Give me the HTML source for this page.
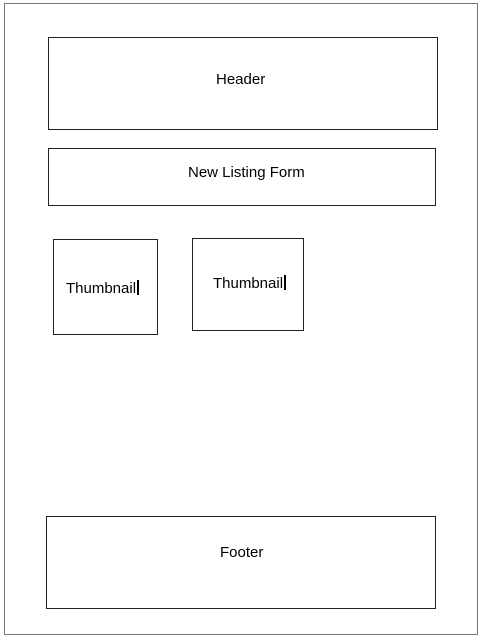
<!DOCTYPE html>
<html><head><style>
body{margin:0;width:482px;height:640px;background:#fff;position:relative;font-family:"Liberation Sans",Arial,sans-serif;font-size:15px;color:#000;overflow:hidden}
.b{position:absolute;border:1px solid #222;box-sizing:border-box}
.t{position:absolute;white-space:nowrap}
.c{display:inline-block;width:2px;height:15px;background:#000;vertical-align:-2px;margin-left:1px}
</style></head><body>
<div class="b" style="left:4px;top:3px;width:474px;height:632px;border-color:#777"></div>
<div class="b" style="left:48px;top:37px;width:390px;height:93px"></div>
<div class="t" style="left:216px;top:71px">Header</div>
<div class="b" style="left:48px;top:148px;width:388px;height:58px"></div>
<div class="t" style="left:188px;top:164px">New Listing Form</div>
<div class="b" style="left:53px;top:239px;width:105px;height:96px"></div>
<div class="t" style="left:66px;top:280px">Thumbnail<span class="c"></span></div>
<div class="b" style="left:192px;top:238px;width:112px;height:93px"></div>
<div class="t" style="left:213px;top:275px">Thumbnail<span class="c"></span></div>
<div class="b" style="left:46px;top:516px;width:390px;height:93px"></div>
<div class="t" style="left:220px;top:544px">Footer</div>
</body></html>
